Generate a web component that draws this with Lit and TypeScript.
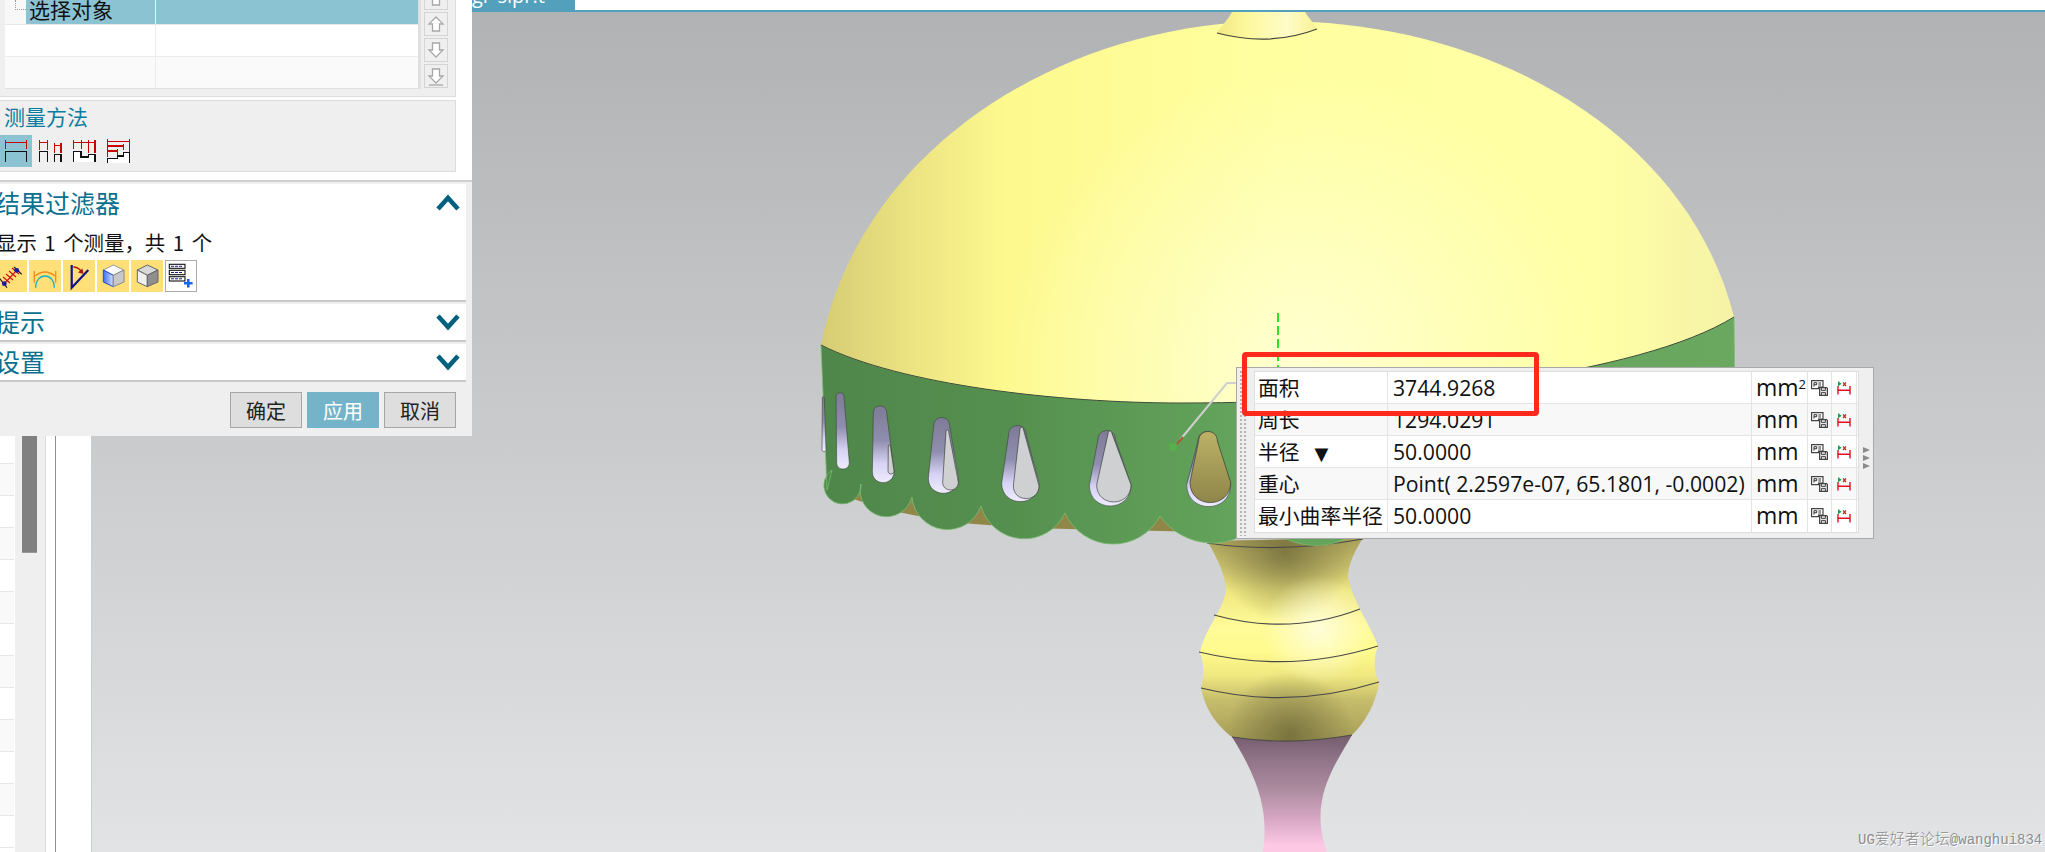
import { LitElement, html, css, svg } from 'lit';
import { customElement } from 'lit/decorators.js';

// zoom crop of the shade was 3x from (800,330), easier to keep those numbers
const zx = (v: number) => 800 + v / 3;
const zy = (v: number) => 330 + v / 3;

function drop(tx: number, ty: number, by: number, l: number, r: number, n = 10) {
  const x0 = zx(tx), y0 = zy(ty), yb = zy(by), xl = zx(l), xr = zx(r);
  const belly = yb - (xr - xl) / 2;
  const k = n / 3;
  const ctrl = belly + (yb - belly) * 1.33;
  return `M${x0 - k} ${y0 + k} C${x0 - k} ${y0 - k * 0.35} ${x0 + k} ${y0 - k * 0.35} ${x0 + k} ${y0 + k} L${xr} ${belly} C${xr} ${ctrl} ${xl} ${ctrl} ${xl} ${belly} Z`;
}

type Drop = [number, number, number, number, number, number];

const holes: { o: Drop; i?: Drop; tan?: boolean }[] = [
  { o: [70, 200, 365, 66, 78, 3] },
  { o: [120, 188, 417, 110, 148, 12] },
  { o: [240, 228, 458, 217, 282, 20], i: [268, 345, 432, 264, 282, 3] },
  { o: [425, 263, 490, 385, 475, 24], i: [442, 300, 480, 428, 475, 4] },
  { o: [652, 287, 515, 605, 717, 26], i: [665, 292, 506, 640, 717, 5] },
  { o: [920, 302, 528, 868, 993, 26], i: [930, 303, 516, 890, 993, 5] },
  { o: [1222, 305, 530, 1160, 1292, 28], i: [1224, 305, 518, 1170, 1292, 28], tan: true },
];

// scallops go right to left as arcs between the notches
const BAND =
  'M821 345 C900 385 1060 403 1180 403 C1400 403 1640 375 1734 317 L1736 515 L1370 520 ' +
  'A70 70 0 0 1 1262 520 A64.5 64.5 0 0 1 1160 516 A53 53 0 0 1 1065 513 A45 45 0 0 1 981 506 ' +
  'A35.6 35.6 0 0 1 912 497 A26 26 0 0 1 861 484 A18.6 18.6 0 1 1 832 470 L827 490 Z';

const STEM =
  'M1207 541 C1222 565 1228 585 1225 595 C1222 610 1205 630 1200 652 C1204 662 1204 676 1201 688 ' +
  'C1206 712 1218 726 1232 737 Q1290 746 1352 735 C1366 722 1376 702 1379 683 C1374 672 1373 658 1378 646 ' +
  'C1372 628 1352 600 1348 577 C1348 565 1355 550 1363 538 Z';

const DOME =
  'M821 345 C860 150 1060 21 1278 21 C1500 21 1690 140 1734 317 C1640 375 1400 403 1180 403 C1060 403 900 385 821 345 Z';

const lamp = svg`
  <defs>
    <linearGradient id="dome" gradientUnits="userSpaceOnUse" x1="821" y1="0" x2="1734" y2="0">
      <stop offset="0" stop-color="#d6cc74"/>
      <stop offset=".1" stop-color="#ece382"/>
      <stop offset=".2" stop-color="#fdf98e"/>
      <stop offset=".5" stop-color="#ffffa0"/>
      <stop offset=".85" stop-color="#ffffa6"/>
      <stop offset="1" stop-color="#f5f2a6"/>
    </linearGradient>
    <radialGradient id="glow" gradientUnits="userSpaceOnUse" cx="1300" cy="370" r="300">
      <stop offset="0" stop-color="#ffffd4" stop-opacity=".95"/>
      <stop offset="1" stop-color="#ffffd4" stop-opacity="0"/>
    </radialGradient>
    <linearGradient id="band" gradientUnits="userSpaceOnUse" x1="821" y1="0" x2="1734" y2="0">
      <stop offset="0" stop-color="#4f874b"/>
      <stop offset=".2" stop-color="#558f4f"/>
      <stop offset=".45" stop-color="#63a35b"/>
      <stop offset="1" stop-color="#6aa860"/>
    </linearGradient>
    <linearGradient id="wall" x1="0" y1="0" x2="0" y2="1">
      <stop offset="0" stop-color="#7d7b96"/>
      <stop offset=".45" stop-color="#908eae"/>
      <stop offset=".75" stop-color="#d6d3f4"/>
      <stop offset="1" stop-color="#efecff"/>
    </linearGradient>
    <linearGradient id="tan" x1="0" y1="0" x2="0" y2="1">
      <stop offset="0" stop-color="#bdb267"/>
      <stop offset="1" stop-color="#8e8549"/>
    </linearGradient>
    <linearGradient id="finial" gradientUnits="userSpaceOnUse" x1="1217" y1="0" x2="1317" y2="0">
      <stop offset="0" stop-color="#f2e985"/>
      <stop offset=".3" stop-color="#fdf89c"/>
      <stop offset=".7" stop-color="#fffcc8"/>
      <stop offset="1" stop-color="#f8f294"/>
    </linearGradient>
    <linearGradient id="stem" gradientUnits="userSpaceOnUse" x1="0" y1="538" x2="0" y2="740">
      <stop offset="0" stop-color="#a89f58"/>
      <stop offset=".14" stop-color="#c8bf6c"/>
      <stop offset=".26" stop-color="#efe780"/>
      <stop offset=".44" stop-color="#fffb98"/>
      <stop offset=".56" stop-color="#fffb8e"/>
      <stop offset=".68" stop-color="#f0e880"/>
      <stop offset=".8" stop-color="#c6bd6c"/>
      <stop offset="1" stop-color="#a79e58"/>
    </linearGradient>
    <radialGradient id="stemGlow" gradientUnits="userSpaceOnUse" cx="1318" cy="630" r="55">
      <stop offset="0" stop-color="#fffde0" stop-opacity=".9"/>
      <stop offset="1" stop-color="#fffde0" stop-opacity="0"/>
    </radialGradient>
    <radialGradient id="dimTop" gradientUnits="userSpaceOnUse" cx="1285" cy="552" r="70">
      <stop offset="0" stop-color="#5f5a30" stop-opacity=".65"/>
      <stop offset="1" stop-color="#5f5a30" stop-opacity="0"/>
    </radialGradient>
    <radialGradient id="dimLow" gradientUnits="userSpaceOnUse" cx="1290" cy="735" r="65">
      <stop offset="0" stop-color="#5f5a30" stop-opacity=".65"/>
      <stop offset="1" stop-color="#5f5a30" stop-opacity="0"/>
    </radialGradient>
    <linearGradient id="pink" gradientUnits="userSpaceOnUse" x1="0" y1="737" x2="0" y2="852">
      <stop offset="0" stop-color="#775e70"/>
      <stop offset=".2" stop-color="#917488"/>
      <stop offset=".46" stop-color="#ad8ca0"/>
      <stop offset=".72" stop-color="#d8a8c4"/>
      <stop offset=".94" stop-color="#fcc8e4"/>
    </linearGradient>
  </defs>

  <path d="M1263 852 C1268 815 1262 785 1232 737 L1352 735 C1335 765 1308 800 1327 852 Z" fill="url(#pink)"/>
  <path d="${STEM}" fill="url(#stem)"/>
  <path d="${STEM}" fill="url(#dimTop)"/>
  <path d="${STEM}" fill="url(#dimLow)"/>
  <path d="${STEM}" fill="url(#stemGlow)"/>
  <g fill="none" stroke="#4a4a48" stroke-width="1.2">
    <path d="M1214 615 Q1290 636 1360 609"/>
    <path d="M1199 652 Q1290 674 1378 646"/>
    <path d="M1201 688 Q1290 710 1379 682"/>
    <path d="M1232 737 Q1290 746 1352 735"/>
    <path d="M1207 543 Q1280 554 1363 539"/>
  </g>

  <path d="M832 450 L827 490 L850 498 L888 510 L948 522 L1027 528 L1113 530 L1210 532 L1300 532 L1300 480 Z" fill="#8f8648"/>
  <path d="${BAND}" fill="url(#band)" stroke="#7cbd72" stroke-width=".8"/>
  ${holes.map(
    (h) => svg`
      <path d="${drop(...h.o)}" fill="url(#wall)" stroke="#39413a" stroke-width=".6"/>
      ${h.i
        ? svg`<path d="${drop(...h.i)}" fill="${h.tan ? 'url(#tan)' : '#cfd0d2'}" stroke="#2c2c2c" stroke-width=".6"/>`
        : ''}
    `,
  )}

  <path d="${DOME}" fill="url(#dome)"/>
  <path d="${DOME}" fill="url(#glow)"/>
  <path d="M821 345 C900 385 1060 403 1180 403 C1400 403 1640 375 1734 317" fill="none" stroke="#3d4a38" stroke-width="1"/>

  <path d="M1232 12 L1305 12 C1310 20 1315 24 1317 29 Q1270 47 1217 33 C1222 25 1228 20 1232 12 Z" fill="url(#finial)"/>
  <path d="M1217 33 Q1270 47 1317 29" fill="none" stroke="#45453a" stroke-width="1.2"/>

  <path d="M1278 313 V367" stroke="#2fe02f" stroke-width="2" stroke-dasharray="9 4" fill="none"/>
  <path d="M1236 383 H1227 L1180 440" stroke="#cfcfcf" stroke-width="2" fill="none"/>
  <path d="M1183 437 L1177 444" stroke="#a85a35" stroke-width="2" fill="none"/>
  <circle cx="1173" cy="447" r="4" fill="#58b04c"/>
`;

const moveArrow = (down = false, bar = false) => html`
  <svg width="24" height="22" viewBox="0 0 24 22">
    <path
      d="M12 4 L19 11 H15.5 V18 H8.5 V11 H5 Z"
      fill="#fff"
      stroke="#a8a8a8"
      stroke-width="1.3"
      transform="${down ? 'rotate(180 12 11)' : ''}"
    />
    ${bar ? svg`<path d="M5 20 H19" stroke="#a8a8a8" stroke-width="1.3"/>` : ''}
  </svg>
`;

const methodIcons = [
  svg`<g fill="none" stroke-width="1.4">
    <path d="M5.3 5.3 V13.7 M26.7 5.3 V13.7 M5.3 7.7 H26.7" stroke="#c80000"/>
    <path d="M5.3 27 V16.3 H26.7 V27" stroke="#111"/>
  </g>`,
  svg`<g fill="none" stroke-width="1.4">
    <path d="M5.3 5.3 V14.7 M13.7 5.3 V14.7 M5.3 7.7 H13.7 M20.3 8 V17.7 M27 8 V17.7 M20.3 10.7 H27" stroke="#c80000"/>
    <path d="M5.3 27 V16.3 H13.7 V27 M20.3 27 V19.7 H27 V27" stroke="#111"/>
  </g>`,
  svg`<path d="M5.3 16.3 H13 V22 H20.3 V19.3 H27 V27 H5.3 Z" fill="#fff"/>
  <g fill="none" stroke-width="1.4">
    <path d="M5.3 5.3 V14.3 M13.7 5.3 V14.3 M20.3 5.3 V17.7 M27 5.3 V17.7 M5.3 7.7 H27" stroke="#c80000"/>
    <path d="M5.3 27 V16.3 H13 V22 H20.3 V19.3 H27 V27" stroke="#111"/>
  </g>`,
  svg`<path d="M5.3 23.7 H15.3 V21 H21.3 V17.7 H27.3 V27.7 H5.3 Z" fill="#fff"/>
  <g fill="none" stroke-width="1.4">
    <path d="M5.3 4.3 V22 M27.3 4.3 V17 M5.3 6.3 H27.3 M5.3 11 H21.3 M21.3 8.7 V15.3 M5.3 16 H15.3 M15.3 13.7 V19.7" stroke="#c80000"/>
    <path d="M5.3 27.7 V23.7 H15.3 V21 H21.3 V17.7 H27.3 V27.7" stroke="#111"/>
  </g>`,
];

const filterIcons = [
  svg`<path d="M4.3 18 L12 27.7 M19 7 L26.7 14.3" stroke="#222" stroke-width="1.2"/>
    <path d="M9.3 23.7 L21.7 10.3" stroke="#d01010" stroke-width="1.2"/>
    <path d="M8 17 L15 23 M11 14 L18 20 M14 11 L21 17 M17 8 L24 14" stroke="#d01010" stroke-width="1.1"/>
    <circle cx="9.3" cy="23.7" r="2.4" fill="#1818b0"/><circle cx="21.7" cy="10.3" r="2.4" fill="#1818b0"/>`,
  svg`<path d="M6.7 27.7 C6.7 12 25.3 12 25.3 27.7" fill="none" stroke="#1fb0c0" stroke-width="1.4"/>
    <path d="M5.3 11 V22.7 M26.7 11 V22.7 M6 16 Q16 8 26 16" fill="none" stroke="#f08c20" stroke-width="1.3"/>`,
  svg`<path d="M8.7 5 V27.7 L25.3 10" fill="none" stroke="#10108c" stroke-width="2.2"/>
    <path d="M10.3 7 Q15 7 18 11" fill="none" stroke="#b01818" stroke-width="1.4"/>
    <path d="M15 12.5 L20.5 14 L19.5 8.5 Z" fill="#b01818"/>`,
  svg`<defs><linearGradient id="cubeL" x1="0" y1="0" x2="1" y2="0">
      <stop offset="0" stop-color="#3a6cf0"/><stop offset="1" stop-color="#d6e4ff"/></linearGradient></defs>
    <path d="M16.3 5 L27 10 L16.3 15.3 L6.3 10 Z" fill="#fbfbff" stroke="#9a9a9a"/>
    <path d="M6.3 10 L16.3 15.3 V26.7 L6.3 22 Z" fill="url(#cubeL)" stroke="#2a4ac8"/>
    <path d="M16.3 15.3 L27 10 V22 L16.3 26.7 Z" fill="#c8c8c8" stroke="#8a8a8a"/>`,
  svg`<path d="M16.3 5 L27 10 L16.3 15.3 L6.3 10 Z" fill="#d8d8d8" stroke="#666"/>
    <path d="M6.3 10 L16.3 15.3 V26.7 L6.3 22 Z" fill="#f0f0f0" stroke="#666"/>
    <path d="M16.3 15.3 L27 10 V22 L16.3 26.7 Z" fill="#8f8f8f" stroke="#666"/>`,
  svg`<g fill="#fff" stroke="#111" stroke-width="1.1">
      <rect x="4.3" y="4.3" width="15.7" height="4"/><rect x="4.3" y="10.3" width="15.7" height="4.4"/><rect x="4.3" y="16.7" width="15.7" height="4.3"/>
    </g>
    <path d="M6 6.3 H18 M6 12.5 H18 M6 18.8 H18" stroke="#1a1a9a" stroke-dasharray="3 1"/>
    <path d="M23.3 19 V27.6 M19 23.3 H27.6" stroke="#1068f0" stroke-width="2.6"/>`,
];

const chevron = (up: boolean) => html`
  <svg class="chev" width="24" height="18" viewBox="0 0 24 18">
    <path d="${up ? 'M2 15 L12 4 L22 15' : 'M2 3 L12 14 L22 3'}" fill="none" stroke="#00617f" stroke-width="4.6"/>
  </svg>
`;

const docIcon = html`
  <svg width="17" height="16" viewBox="0 0 17 16">
    <path d="M.6 .6 H12 V7 H7.5 V8.6 H.6 Z" fill="#fff" stroke="#444" stroke-width="1.2"/>
    <path d="M3 6.6 V2.7 H5.8 V4.7 H3 M7.4 3 H10 M7.4 5 H10" fill="none" stroke="#333"/>
    <path d="M8.6 7.6 H15.6 L16.4 8.4 V15.4 H8.6 Z" fill="#e8e8e8" stroke="#444" stroke-width="1.2"/>
    <path d="M10.4 8 V10.4 H14.4 V8 M10.4 15 V12.6 H14.4 V15" fill="none" stroke="#444"/>
  </svg>
`;

const dimIcon = html`
  <svg width="14" height="14" viewBox="0 0 14 14">
    <path d="M1 0 L4.6 2.8 L1 5.6 Z" fill="#2c9a5a"/>
    <path d="M6 1.4 L9 5 M9 1.4 L6 5" stroke="#e01020" stroke-width="1.2"/>
    <path d="M1 5 V13.4 M13 5 V13.4 M1 9.2 H13" stroke="#e01020" stroke-width="1.4"/>
  </svg>
`;

const rows = [
  { name: '面积', value: '3744.9268', unit: 'mm', sup: true },
  { name: '周长', value: '1294.0291', unit: 'mm' },
  { name: '半径', value: '50.0000', unit: 'mm', mark: true },
  { name: '重心', value: 'Point( 2.2597e-07, 65.1801, -0.0002)', unit: 'mm' },
  { name: '最小曲率半径', value: '50.0000', unit: 'mm' },
];

@customElement('app-root')
export class AppRoot extends LitElement {
  static styles = css`
    :host {
      display: block;
      position: relative;
      width: 2045px;
      height: 852px;
      overflow: hidden;
      font-family: 'Open Sans', 'Noto Sans CJK SC', sans-serif;
      color: #111;
    }
    .topbar {
      height: 10px;
      background: #fff;
      border-bottom: 2px solid #52a0bb;
      overflow: hidden;
    }
    .tab {
      margin-left: 472px;
      width: 103px;
      height: 10px;
      background: #52a0bb;
      color: #fff;
      font-size: 20px;
      line-height: 20px;
      overflow: hidden;
      white-space: nowrap;
    }
    .tab span {
      display: block;
      margin-top: -14px;
    }
    .body {
      display: flex;
      height: 840px;
    }
    .strip {
      display: flex;
      flex: none;
      width: 92px;
      background: #fff;
      box-sizing: border-box;
      border-right: 1px solid #cccccc;
    }
    .list {
      width: 15px;
      padding-top: 4px;
      overflow: hidden;
    }
    .list div {
      height: 31px;
      border-bottom: 1px solid #e6e6e6;
      margin-right: 1px;
    }
    .list div:nth-child(odd) {
      background: #f9f9f9;
    }
    .track {
      width: 30px;
      background: #efefef;
      padding-left: 7px;
      box-sizing: border-box;
    }
    .thumb {
      width: 15px;
      height: 540px;
      background: #808080;
      border-bottom: 1px solid #999;
    }
    .gutter {
      width: 9px;
      border-left: 1px solid #ddd;
      border-right: 1px solid #8a9090;
    }
    .view {
      position: relative;
      flex: 1;
      background: linear-gradient(#b1b2b4, #e2e3e5);
    }
    .view > svg {
      position: absolute;
      inset: 0;
    }
    .mark {
      position: absolute;
      left: 1766px;
      bottom: 4px;
      color: #8c8c8c;
      font-family: 'Liberation Mono', 'Noto Sans CJK SC', monospace;
      font-size: 14px;
      line-height: 16px;
      white-space: nowrap;
      text-shadow: 1px 1px 0 #fff;
    }
    .mark span {
      font-size: 15px;
      font-family: 'Noto Sans CJK SC', sans-serif;
      font-weight: 300;
    }

    /* dialog, lies over the strip and the top bar */
    .dialog {
      position: absolute;
      left: 0;
      top: 0;
      width: 472px;
      height: 436px;
      background: #efefef;
      overflow: hidden;
      display: flex;
      flex-direction: column;
      font-family: 'Noto Sans CJK SC', sans-serif;
    }
    .upper {
      flex: none;
      height: 180px;
      background: #fff;
      border-bottom: 2px solid #d0d0d0;
      margin-bottom: 2px;
    }
    .pick {
      display: flex;
      width: 456px;
      height: 97px;
      box-sizing: border-box;
      background: #efefef;
      border-bottom: 1px solid #dcdcdc;
      border-right: 1px solid #dcdcdc;
      padding-left: 5px;
    }
    .table {
      width: 416px;
      height: 89px;
      background: #fff;
      border-right: 3px solid #dfdfdf;
      border-bottom: 2px solid #dfdfdf;
      box-sizing: border-box;
    }
    .tr {
      display: grid;
      grid-template-columns: 150px 1fr;
      height: 31px;
      border-bottom: 1px solid #ececec;
    }
    .tr.sel {
      height: 24px;
      border-bottom-color: #e8e8e8;
      background: #f8f8f8;
    }
    .tr.alt {
      background: #fafafa;
      border-bottom: 0;
    }
    .tr > div + div {
      border-left: 1px solid #ececec;
    }
    .tree {
      display: flex;
    }
    .dots {
      flex: none;
      width: 10px;
      height: 9px;
      margin-left: 10px;
      border-left: 1px dotted #999;
      border-bottom: 1px dotted #999;
    }
    .tree .name {
      flex: 1;
      padding-left: 3px;
      background: #8cc3d3;
      font-size: 21px;
      line-height: 18px;
      overflow: hidden;
      white-space: nowrap;
    }
    .tr.sel .fill {
      background: #8cc3d3;
      border-left-color: #e8f3f6;
    }
    .moves {
      margin: -14px 0 0 3px;
      display: flex;
      flex-direction: column;
      gap: 2px;
    }
    .moves button {
      display: block;
      width: 24px;
      height: 24px;
      padding: 0;
      background: #efefef;
      border: 1px solid #d4d4d4;
      box-sizing: border-box;
    }
    .moves svg {
      display: block;
      margin: 0 0 0 -1px;
    }
    .method {
      width: 456px;
      height: 72px;
      margin-top: 3px;
      box-sizing: border-box;
      background: #efefef;
      border: 1px solid #dcdcdc;
      border-left: 0;
    }
    .method h4 {
      margin: 0;
      padding-left: 4px;
      height: 34px;
      font-size: 21px;
      font-weight: 400;
      line-height: 30px;
      color: #0b7c9e;
    }
    .method .icons {
      display: flex;
      gap: 2px;
    }
    .method .icon {
      width: 32px;
      height: 32px;
    }
    .method .icon.on {
      background: #8cc3d3;
    }
    .method svg {
      display: block;
      shape-rendering: crispEdges;
    }
    .sec {
      flex: none;
      width: 466px;
      background: #fff;
      border-bottom: 2px solid #c8c8c8;
      margin-bottom: 2px;
    }
    .sec header {
      display: flex;
      align-items: center;
      justify-content: space-between;
      padding-right: 6px;
      height: 36px;
      margin-left: -5px;
      font-size: 25px;
      color: #0a7090;
      white-space: nowrap;
    }
    .sec header span {
      margin-top: -3px;
    }
    .sec.open {
      height: 116px;
    }
    .sec.open header {
      height: 38px;
    }
    .count {
      margin-left: -4px;
      height: 38px;
      font-size: 20.4px;
      line-height: 40px;
      word-spacing: 3px;
      white-space: pre;
    }
    .tools {
      display: flex;
      gap: 2px;
      margin-left: -5px;
    }
    .tools span {
      width: 32px;
      height: 32px;
      background: #ffdf77;
    }
    .tools span.plain {
      background: #fff;
      outline: 1px solid #aaa;
      outline-offset: -1px;
    }
    .tools svg {
      display: block;
    }
    .foot {
      display: flex;
      justify-content: flex-end;
      gap: 5px;
      padding: 8px 16px 0 0;
    }
    .foot button {
      width: 72px;
      height: 36px;
      padding: 0;
      font: 400 20px 'Noto Sans CJK SC', sans-serif;
      color: #222;
      background: #dedede;
      border: 1px solid #a6a6a6;
    }
    .foot button.apply {
      background: #75b3c9;
      border-color: #75b3c9;
      color: #fff;
    }

    /* measure popup */
    .pop {
      position: absolute;
      left: 1236px;
      top: 367px;
      width: 638px;
      height: 172px;
      box-sizing: border-box;
      background: #efefef;
      border: 1px solid #a9a9a9;
      padding: 3px 0 0 17px;
      display: flex;
    }
    .grip {
      position: absolute;
      left: 2px;
      top: 2px;
      bottom: 2px;
      width: 9px;
      background-image: radial-gradient(#b4b4b4 1.3px, transparent 1.4px);
      background-size: 4px 4px;
    }
    .grid {
      width: 605px;
      height: 162px;
      background: #fff;
      border: 1px solid #dedede;
      box-sizing: border-box;
    }
    .row {
      display: grid;
      grid-template-columns: 133px 364px 56px 24px 25px;
      height: 32px;
      box-sizing: border-box;
      border-bottom: 1px solid #e4e4e4;
      font-size: 21.2px;
      line-height: 31px;
      white-space: nowrap;
    }
    .row:last-child {
      border-bottom: 0;
    }
    .row:nth-child(even) {
      background: #f8f8f8;
    }
    .row > div {
      border-right: 1px solid #e4e4e4;
      overflow: hidden;
    }
    .row .n {
      padding-left: 3px;
      font-family: 'Noto Sans CJK SC', sans-serif;
      font-size: 20.8px;
    }
    .row .v {
      padding-left: 5px;
    }
    .row .u {
      padding-left: 4px;
      font-size: 23px;
    }
    .row sup {
      font-size: 13px;
      line-height: 0;
      vertical-align: 7px;
    }
    .row .ic {
      display: flex;
      align-items: center;
      justify-content: center;
    }
    .tri {
      margin-left: 15px;
      font-size: 18px;
      font-family: 'DejaVu Sans', sans-serif;
    }
    .more {
      margin: 76px 0 0 4px;
      display: flex;
      flex-direction: column;
      gap: 2px;
    }
    .more i {
      display: block;
      width: 0;
      height: 0;
      border-left: 7px solid #8a8a8a;
      border-top: 3px solid transparent;
      border-bottom: 3px solid transparent;
    }
    .redbox {
      position: absolute;
      left: 1242px;
      top: 352px;
      width: 297px;
      height: 64px;
      box-sizing: border-box;
      border: 5px solid #ff2a1c;
      border-radius: 4px;
    }
  `;

  render() {
    return html`
      <div class="topbar"><div class="tab"><span>gr-sipr.t</span></div></div>
      <div class="body">
        <div class="strip">
          <div class="list">${Array.from({ length: 26 }, () => html`<div></div>`)}</div>
          <div class="track"><div class="thumb"></div></div>
          <div class="gutter"></div>
        </div>
        <div class="view">
          <svg width="1953" height="840" viewBox="92 12 1953 840">${lamp}</svg>
          <div class="mark">UG<span>爱好者论坛</span>@wanghui834</div>
        </div>
      </div>

      <div class="dialog">
        <div class="upper">
          <div class="pick">
            <div class="table">
              <div class="tr sel">
                <div class="tree"><div class="dots"></div><div class="name">选择对象</div></div>
                <div class="fill"></div>
              </div>
              <div class="tr"><div></div><div></div></div>
              <div class="tr alt"><div></div><div></div></div>
            </div>
            <div class="moves">
              <button>${moveArrow()}</button>
              <button>${moveArrow()}</button>
              <button>${moveArrow(true)}</button>
              <button>${moveArrow(true, true)}</button>
            </div>
          </div>
          <div class="method">
            <h4>测量方法</h4>
            <div class="icons">
              ${methodIcons.map(
                (icon, i) => html`<div class="icon ${i === 0 ? 'on' : ''}">
                  <svg width="32" height="32" viewBox="0 0 32 32">${icon}</svg>
                </div>`,
              )}
            </div>
          </div>
        </div>

        <div class="sec open">
          <header><span>结果过滤器</span>${chevron(true)}</header>
          <div class="count">显示 1 个测量，共 1 个</div>
          <div class="tools">
            ${filterIcons.map(
              (icon, i) => html`<span class="${i === 5 ? 'plain' : ''}">
                <svg width="32" height="32" viewBox="0 0 32 32">${icon}</svg>
              </span>`,
            )}
          </div>
        </div>
        <div class="sec"><header><span>提示</span>${chevron(false)}</header></div>
        <div class="sec"><header><span>设置</span>${chevron(false)}</header></div>

        <div class="foot">
          <button>确定</button>
          <button class="apply">应用</button>
          <button>取消</button>
        </div>
      </div>

      <div class="pop">
        <div class="grip"></div>
        <div class="grid">
          ${rows.map(
            (r) => html`
              <div class="row">
                <div class="n">${r.name}${r.mark ? html`<span class="tri">▼</span>` : ''}</div>
                <div class="v">${r.value}</div>
                <div class="u">${r.unit}${r.sup ? html`<sup>2</sup>` : ''}</div>
                <div class="ic">${docIcon}</div>
                <div class="ic">${dimIcon}</div>
              </div>
            `,
          )}
        </div>
        <div class="more"><i></i><i></i><i></i></div>
      </div>
      <div class="redbox"></div>
    `;
  }
}
